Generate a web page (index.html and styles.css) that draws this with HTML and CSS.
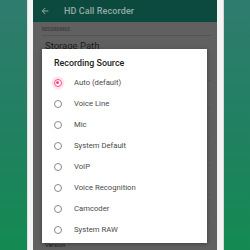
FILE: index.html
```html
<!DOCTYPE html>
<html>
<head>
<meta charset="utf-8">
<link rel="stylesheet" href="styles.css">
</head>
<body>
<div class="phone">
  <div class="screen">
    <div class="toolbar">
      <svg class="back" width="10" height="10" viewBox="0 0 24 24"><path d="M20 11H7.8l5.6-5.6L12 4l-8 8 8 8 1.4-1.4L7.8 13H20z" fill="#8fa8a2"/></svg>
      <span class="title">HD Call Recorder</span>
    </div>
    <div class="settings">
      <div class="cat">RECORDINGS</div>
      <div class="pref">Storage Path</div>
      <div class="row"></div>
      <div class="row"></div>
      <div class="row"></div>
      <div class="row"></div>
      <div class="row"></div>
      <div class="row"></div>
      <div class="row short"></div>
      <div class="pref small">Version</div>
    </div>
    <div class="dialog">
      <div class="dtitle">Recording Source</div>
      <div class="opt"><span class="radio on"></span>Auto (default)</div>
      <div class="opt"><span class="radio"></span>Voice Line</div>
      <div class="opt"><span class="radio"></span>Mic</div>
      <div class="opt"><span class="radio"></span>System Default</div>
      <div class="opt"><span class="radio"></span>VoIP</div>
      <div class="opt"><span class="radio"></span>Voice Recognition</div>
      <div class="opt"><span class="radio"></span>Camcoder</div>
      <div class="opt"><span class="radio"></span>System RAW</div>
    </div>
  </div>
</div>
</body>
</html>
```
FILE: styles.css
```css
html, body {
  margin: 0;
  padding: 0;
}
body {
  width: 250px;
  height: 250px;
  overflow: hidden;
  background: linear-gradient(180deg, #2f7c6e 0%, #218061 50%, #148a52 100%);
  font-family: Roboto, "Liberation Sans", sans-serif;
}
.phone {
  margin-left: 27px;
  width: 184px;
  height: 250px;
  padding: 0 6px 0 5px;
  background: #f4f4f4;
  border-left: 1px solid #e0e0e0;
  border-right: 1px solid #d8d8d8;
  box-sizing: content-box;
}
.screen {
  position: relative;
  height: 250px;
  background: #606060;
  overflow: hidden;
}
.toolbar {
  height: 22px;
  background: #0c4a3f;
  display: flex;
  align-items: center;
  padding-left: 7px;
}
.back {
  display: block;
}
.title {
  margin-left: 14px;
  color: #97aba6;
  font-size: 9px;
  font-weight: 500;
  letter-spacing: 0.1px;
}
.settings {
  padding: 0 6px 0 9px;
}
.cat {
  font-size: 4.6px;
  font-weight: 700;
  color: #3e3e3e;
  padding-top: 5px;
  height: 8px;
  border-bottom: 1px solid #555;
}
.pref {
  font-size: 9.5px;
  color: #1c1c1c;
  padding: 4px 0 0 3px;
  height: 12px;
}
.pref.small {
  font-size: 6px;
  line-height: 6px;
  height: 6px;
  color: #222;
  padding-top: 0;
}
.row {
  height: 27.5px;
  border-bottom: 1px solid #5a5a5a;
}
.row.short {
  height: 18px;
}
.dialog {
  position: absolute;
  left: 9px;
  top: 49px;
  width: 165px;
  height: 194px;
  background: #fff;
  box-shadow: 0 1px 4px rgba(0,0,0,0.35);
  box-sizing: border-box;
  padding: 8px 0 0 12px;
}
.dtitle {
  font-size: 8.9px;
  font-weight: 500;
  color: #222;
  height: 12px;
  line-height: 12px;
  margin-bottom: 3px;
}
.opt {
  display: flex;
  align-items: center;
  height: 21px;
  font-size: 7.7px;
  color: #4a4a4a;
}
.radio {
  width: 8px;
  height: 8px;
  border: 1.2px solid #8a8a8a;
  border-radius: 50%;
  margin: 0 12px 0 0px;
  box-sizing: border-box;
  position: relative;
  flex: none;
}
.radio.on {
  border-color: #ff4081;
  box-shadow: 0 0 0 2.5px rgba(255,64,129,0.15);
}
.radio.on::after {
  content: "";
  position: absolute;
  left: 1.3px;
  top: 1.3px;
  width: 3px;
  height: 3px;
  border-radius: 50%;
  background: #ff4081;
}
```
